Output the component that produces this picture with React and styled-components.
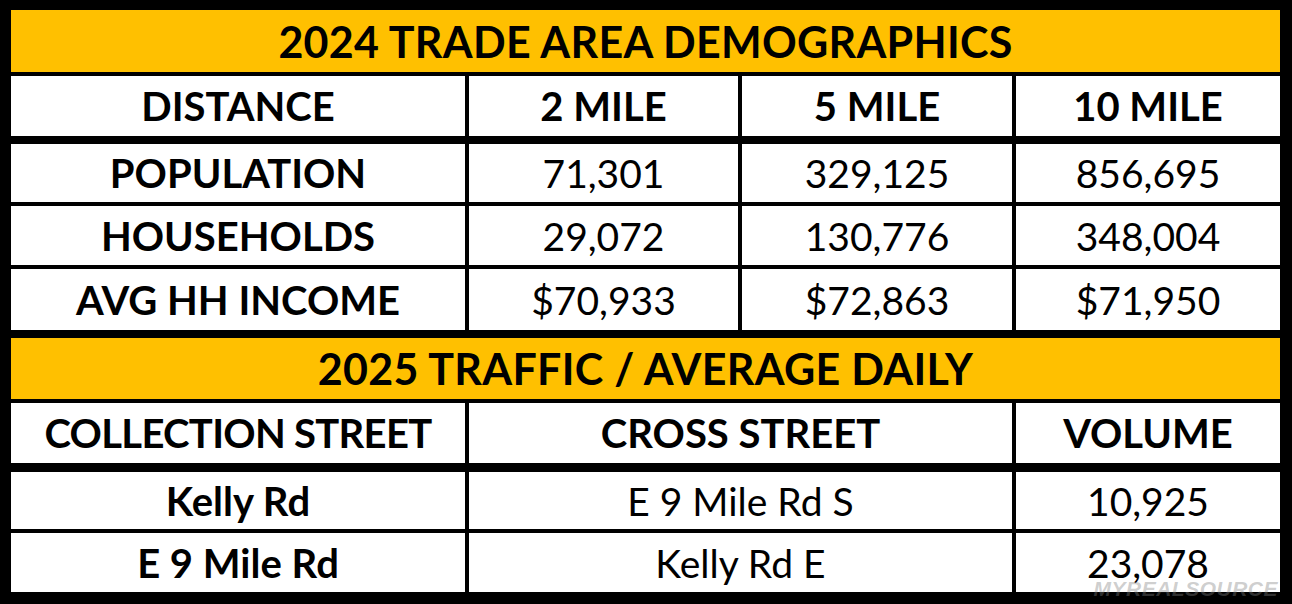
import React from "react";
import styled, { createGlobalStyle } from "styled-components";

const demographics = {
  columns: ["DISTANCE", "2 MILE", "5 MILE", "10 MILE"],
  rows: [
    { label: "POPULATION", values: ["71,301", "329,125", "856,695"], height: 58 },
    { label: "HOUSEHOLDS", values: ["29,072", "130,776", "348,004"], height: 59 },
    { label: "AVG HH INCOME", values: ["$70,933", "$72,863", "$71,950"], height: 61 },
  ],
};

const traffic = {
  columns: ["COLLECTION STREET", "CROSS STREET", "VOLUME"],
  rows: [
    { street: "Kelly Rd", cross: "E 9 Mile Rd S", volume: "10,925", height: 57 },
    { street: "E 9 Mile Rd", cross: "Kelly Rd E", volume: "23,078", height: 59 },
  ],
};

export default function App() {
  return (
    <>
      <GlobalStyle />
      <Frame>
        <Banner $height={62}>2024 TRADE AREA DEMOGRAPHICS</Banner>
        <Row $cols="454px 269px 270px 264px" $height={60} $space={4}>
          {demographics.columns.map((c) => (
            <Cell key={c} $bold>{c}</Cell>
          ))}
        </Row>
        {demographics.rows.map((r, i) => (
          <Row
            key={r.label}
            $cols="454px 269px 270px 264px"
            $height={r.height}
            $space={i === 0 ? 8 : 4}
          >
            <Cell $bold>{r.label}</Cell>
            {r.values.map((v, j) => (
              <Cell key={j}>{v}</Cell>
            ))}
          </Row>
        ))}
        <Banner $height={61} $space={8}>2025 TRAFFIC / AVERAGE DAILY</Banner>
        <Row $cols="454px 543px 264px" $height={60} $space={4}>
          {traffic.columns.map((c) => (
            <Cell key={c} $bold $tight={c === "COLLECTION STREET"}>{c}</Cell>
          ))}
        </Row>
        {traffic.rows.map((r, i) => (
          <Row
            key={r.street}
            $cols="454px 543px 264px"
            $height={r.height}
            $space={i === 0 ? 9 : 4}
          >
            <Cell $bold>{r.street}</Cell>
            <Cell>{r.cross}</Cell>
            <Cell>{r.volume}</Cell>
          </Row>
        ))}
        <Watermark>MYREALSOURCE</Watermark>
      </Frame>
    </>
  );
}

const GlobalStyle = createGlobalStyle`
  html, body {
    margin: 0;
    padding: 0;
    background: #000;
  }
`;

const Frame = styled.div`
  position: relative;
  width: 1292px;
  height: 604px;
  box-sizing: border-box;
  padding: 10px 12px 12px 11px;
  background: #000;
  display: flex;
  flex-direction: column;
  font-family: Lato, "Liberation Sans", sans-serif;
  color: #000;
`;

const Banner = styled.div`
  height: ${(p) => p.$height}px;
  margin-top: ${(p) => p.$space || 0}px;
  background: #ffc000;
  display: flex;
  align-items: center;
  justify-content: center;
  font-weight: 700;
  font-size: 43px;
  letter-spacing: 0.3px;
`;

const Row = styled.div`
  display: grid;
  grid-template-columns: ${(p) => p.$cols};
  column-gap: 4px;
  height: ${(p) => p.$height}px;
  margin-top: ${(p) => p.$space}px;
`;

const Cell = styled.div`
  background: #fff;
  display: flex;
  align-items: center;
  justify-content: center;
  font-size: ${(p) => (p.$bold ? 40 : 39)}px;
  font-weight: ${(p) => (p.$bold ? 700 : 400)};
  letter-spacing: ${(p) => (p.$tight ? "-0.7px" : "0")};
  white-space: nowrap;
`;

const Watermark = styled.div`
  position: absolute;
  right: 14px;
  bottom: 5px;
  font-family: "Liberation Sans", Arial, sans-serif;
  font-size: 21px;
  font-weight: 700;
  font-style: italic;
  line-height: 1;
  color: rgba(128, 128, 128, 0.38);
  letter-spacing: 0.5px;
`;
